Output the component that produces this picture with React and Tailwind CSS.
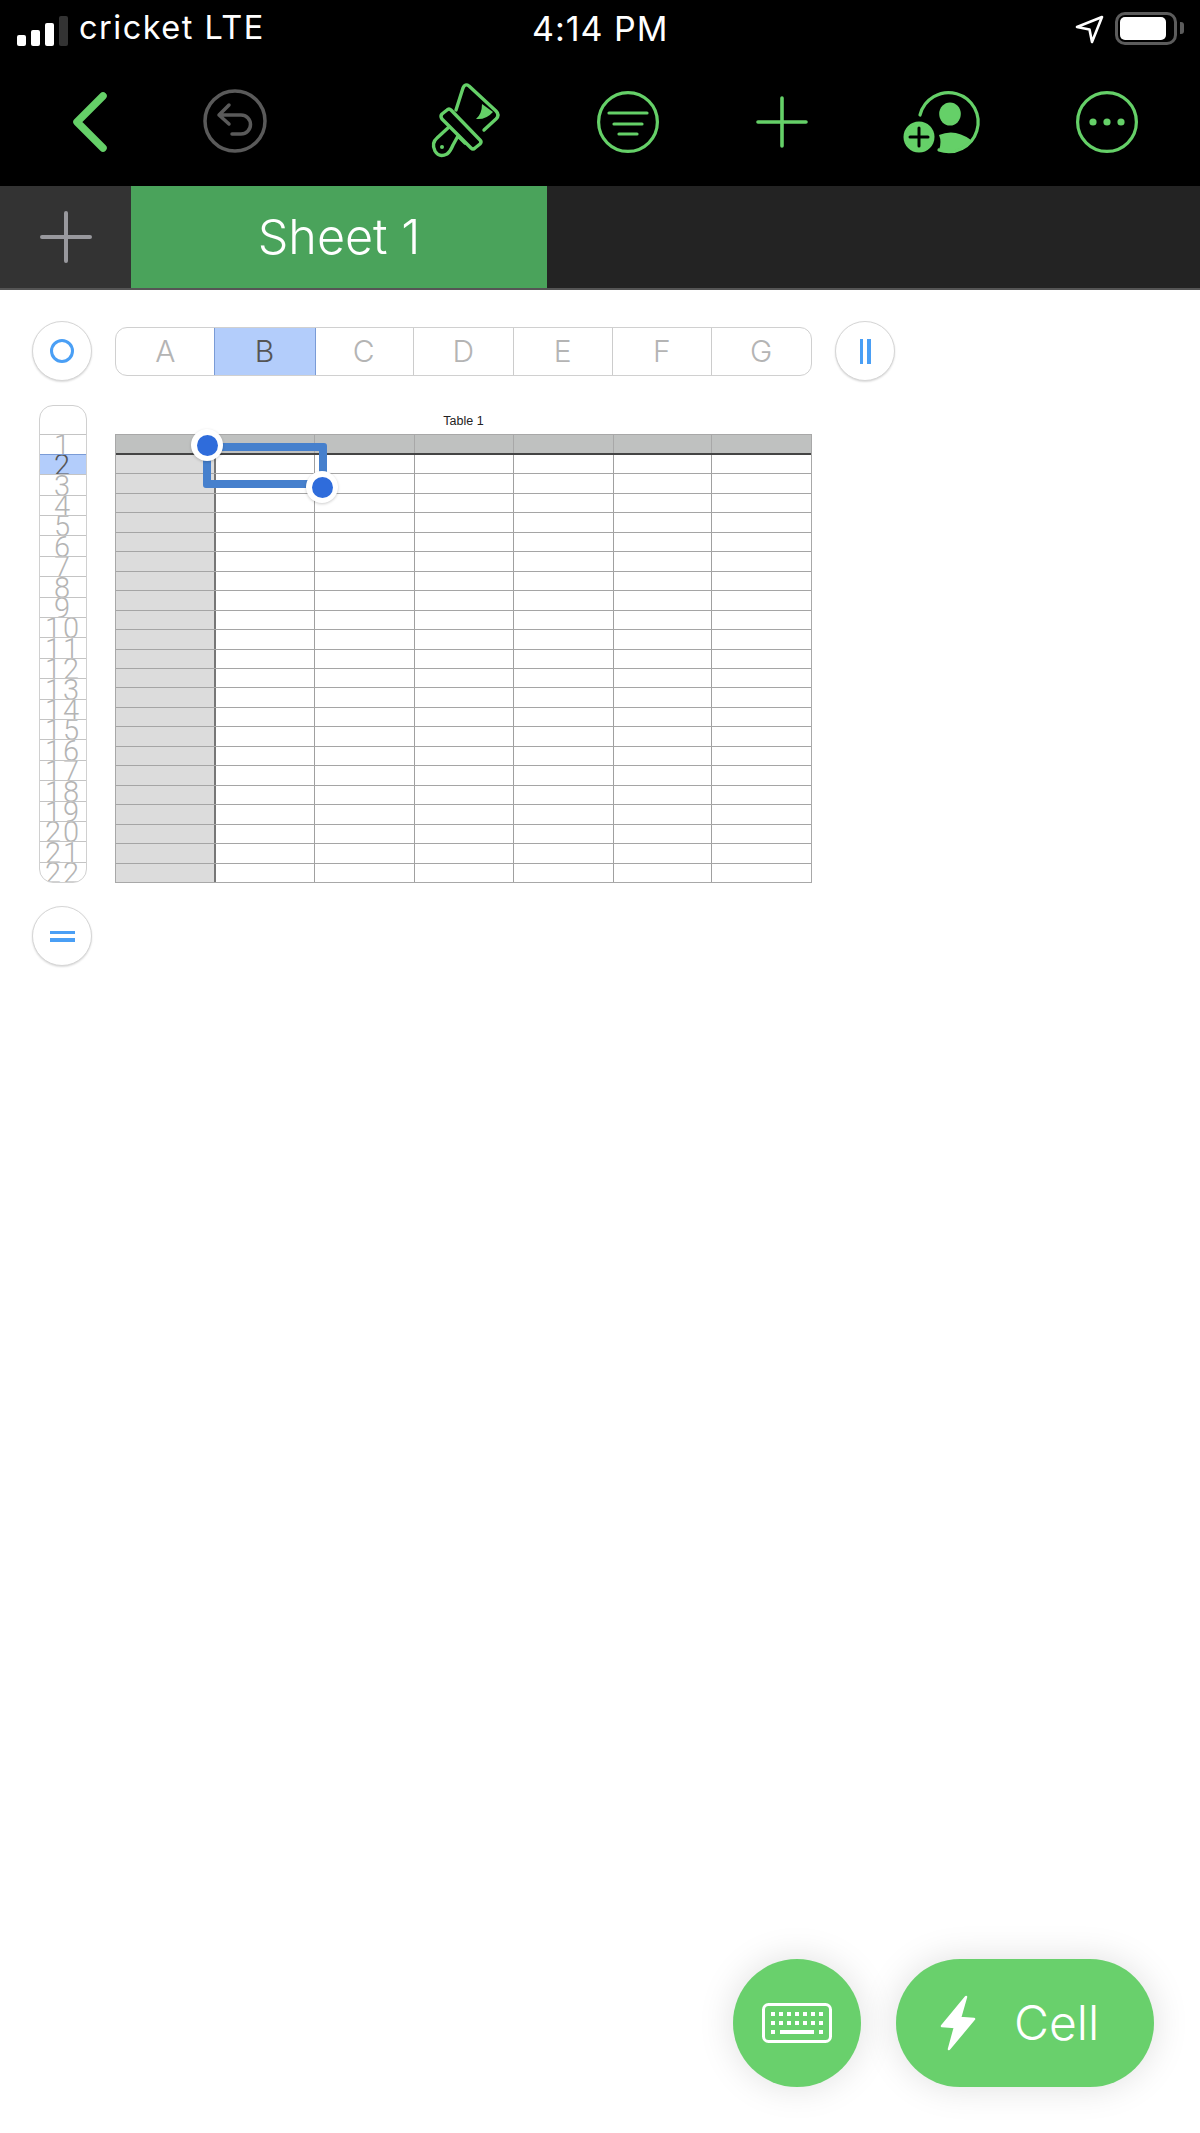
import React from "react";

const COLUMNS = [
  { name: "A", width: "w-[98.5px]", cell: "w-[100px]" },
  { name: "B", width: "w-[100px]", cell: "w-[99px]" },
  { name: "C", width: "w-[99.5px]", cell: "w-[99.5px]" },
  { name: "D", width: "w-[99.5px]", cell: "w-[99.5px]" },
  { name: "E", width: "w-[99.5px]", cell: "w-[99.5px]" },
  { name: "F", width: "w-[98.5px]", cell: "w-[98.5px]" },
  { name: "G", width: "flex-1", cell: "flex-1" },
];
const ROWS = Array.from({ length: 22 }, (_, i) => i + 1);

const StatusBar = () => (
  <div className="h-[60px] relative flex items-center text-white font-['Inter',sans-serif]">
    <div className="ml-[17px] flex items-end gap-[5px] h-[30px] mb-[-1px]">
      <div className="w-[9px] h-[11px] bg-white rounded-[2px]" />
      <div className="w-[9px] h-[16px] bg-white rounded-[2px]" />
      <div className="w-[9px] h-[23px] bg-white rounded-[2px]" />
      <div className="w-[9px] h-[30px] bg-[#333333] rounded-[2px]" />
    </div>
    <span className="ml-[11px] text-[32.5px] leading-none tracking-[1.5px] mt-[-3px]">cricket LTE</span>
    <span className="absolute left-[532px] top-[11px] text-[34px] leading-[36px] tracking-[1px]">4:14 PM</span>
    <svg className="ml-auto mt-[-2px]" width="30" height="30" viewBox="0 0 30 30" fill="none">
      <path d="M2 13 L27 3 L17 28 L14.5 15.5 Z" stroke="white" strokeWidth="2.6" strokeLinejoin="round" />
    </svg>
    <div className="ml-[10px] mr-[16px] flex items-center mt-[-4px]">
      <div className="w-[62px] h-[33px] rounded-[10px] border-[3px] border-[#5c5c5c] p-[2px]">
        <div className="w-[46px] h-[23px] bg-white rounded-[5px]" />
      </div>
      <div className="ml-[3px] w-[4px] h-[12px] bg-[#5c5c5c] rounded-r-[3px]" />
    </div>
  </div>
);

const Toolbar = () => (
  <div className="h-[126px] pb-[3px] flex items-center text-[#65d068]">
    <svg className="ml-[72px]" width="36" height="62" viewBox="0 0 36 62" fill="none">
      <path d="M31 5 L5 31 L31 57" stroke="currentColor" strokeWidth="7.5" strokeLinecap="round" strokeLinejoin="round" />
    </svg>
    <svg className="ml-[87px]" width="80" height="75" viewBox="0 0 80 75" fill="none" stroke="#5a5a5a" strokeWidth="3.5" strokeLinecap="round" strokeLinejoin="round">
      <circle cx="40" cy="37" r="30" />
      <path d="M34 21 L24 31 L34 40 M24 31 H46 A9.5 9.5 0 0 1 46 50 H37" />
    </svg>
    <svg className="ml-[145px]" width="90" height="90" viewBox="0 0 90 90" fill="none" stroke="currentColor" strokeWidth="3.4" strokeLinecap="round" strokeLinejoin="round">
      <path d="M36 33 L43 11 Q45 6 49 9 L76 34 Q80 38 76 42 L64 53" />
      <path d="M62 27 Q62 37 56 42 Q66 43 73 35 Z" fill="currentColor" stroke="none" />
      <path d="M22 37 L27 33 Q29 31 31 33 L60 63 Q62 65 60 67 L55 71 Q53 73 51 71 L22 42 Q20 39 22 37 Z" />
      <path d="M29 50 L17 61 Q11 66 15 74 Q19 81 27 77 Q30 75 33 68 L38 59 L45 66" />
      <circle cx="22" cy="70" r="2" fill="currentColor" stroke="none" />
    </svg>
    <svg className="ml-[87px]" width="62" height="62" viewBox="0 0 62 62" fill="none" stroke="currentColor" strokeWidth="3.2" strokeLinecap="round">
      <circle cx="31" cy="31" r="29.4" />
      <path d="M12 22 H50 M17 33 H45 M22 43 H40" />
    </svg>
    <svg className="ml-[97px]" width="52" height="52" viewBox="0 0 52 52" fill="none" stroke="currentColor" strokeWidth="3.6" strokeLinecap="round">
      <path d="M26 2 V50 M2 26 H50" />
    </svg>
    <svg className="ml-[87px]" width="95" height="80" viewBox="0 0 95 80" fill="none">
      <path d="M25 33 A29.5 29.5 0 1 1 44 68" stroke="currentColor" strokeWidth="3.2" strokeLinecap="round" />
      <ellipse cx="55" cy="32" rx="10.8" ry="11.5" fill="currentColor" />
      <path d="M44 53 Q60 46 76 58 Q64 72 44 68 Q47 60 44 53 Z" fill="currentColor" />
      <circle cx="24" cy="55" r="15.5" fill="currentColor" />
      <path d="M24 46 V64 M15 55 H33" stroke="black" strokeWidth="3" strokeLinecap="round" />
    </svg>
    <svg className="ml-[86px]" width="62" height="62" viewBox="0 0 62 62" fill="none">
      <circle cx="31" cy="31" r="29.4" stroke="currentColor" strokeWidth="3.2" />
      <circle cx="17" cy="31" r="3.6" fill="currentColor" />
      <circle cx="31" cy="31" r="3.6" fill="currentColor" />
      <circle cx="45" cy="31" r="3.6" fill="currentColor" />
    </svg>
  </div>
);

const SheetTabs = () => (
  <div className="h-[104px] flex bg-[#232323] border-b-2 border-[#555555]">
    <div className="w-[131px] bg-[#333333] flex items-center justify-center">
      <svg width="52" height="52" viewBox="0 0 52 52" fill="none" stroke="#98989d" strokeWidth="4" strokeLinecap="round">
        <path d="M26 2 V50 M2 26 H50" />
      </svg>
    </div>
    <div className="w-[416px] bg-[#4aa35b] flex items-center justify-center text-white text-[48.5px] font-light font-['Inter',sans-serif]">
      Sheet 1
    </div>
  </div>
);

const RoundButton = ({ children }) => (
  <div className="w-[60px] h-[60px] shrink-0 rounded-full bg-white border border-[#d6d6d6] shadow-[0_1px_2px_rgba(0,0,0,0.15)] flex items-center justify-center">
    {children}
  </div>
);

const ColumnHeader = () => (
  <div className="ml-[23px] w-[697px] h-[49px] flex rounded-[12px] border-[1.5px] border-[#d0d0d0] overflow-hidden font-['Inter',sans-serif] font-light text-[30px] leading-none">
    {COLUMNS.map((col, i) => (
      <div
        key={col.name}
        className={`${col.width} flex items-center justify-center ${
          col.name === "B" ? "bg-[#b3cdfb] text-[#555555] outline-1 outline-[#7a9bd6]" : "text-[#b4b4b4]"
        } ${i < 6 && col.name !== "A" && col.name !== "B" ? "border-r border-[#cccccc]" : ""}`}
      >
        {col.name}
      </div>
    ))}
  </div>
);

const RowHeader = () => (
  <div className="w-[48px] h-[478px] shrink-0 flex flex-col rounded-[14px] border-[1.5px] border-[#d0d0d0] overflow-hidden font-['Roboto',sans-serif] font-light text-[29px] tracking-[2px]">
    <div className="h-[27.5px] shrink-0" />
    {ROWS.map((n) => (
      <div
        key={n}
        className={`flex-1 min-h-0 overflow-hidden flex items-end justify-center border-t ${
          n === 2 ? "bg-[#b3cdfb] text-[#555555] border-[#7a9bd6]" : "text-[#b4b4b4] border-[#c4c4c4]"
        }`}
      >
        <span className="leading-[18px] h-[18px] whitespace-nowrap">{n}</span>
      </div>
    ))}
  </div>
);

const Handle = ({ className }) => (
  <div className={`absolute w-[32px] h-[32px] rounded-full bg-white shadow-[0_1px_3px_rgba(0,0,0,0.2)] flex items-center justify-center ${className}`}>
    <div className="w-[21px] h-[21px] rounded-full bg-[#2f6cdb]" />
  </div>
);

const Table = () => (
  <div className="ml-[28px] w-[697px]">
    <div className="h-[29px] pt-[9px] text-center text-[12.5px] leading-[14px] text-[#222222] font-['Liberation_Sans',sans-serif]">
      Table 1
    </div>
    <div className="relative h-[449px] flex flex-col border border-[#a8a8a8]">
      <div className="h-[20px] shrink-0 flex bg-[#bfc1c0] border-b-2 border-[#444444]">
        {COLUMNS.map((col, i) => (
          <div key={col.name} className={`${col.cell} ${i < 6 ? "border-r border-[#a8a8a8]" : ""}`} />
        ))}
      </div>
      {ROWS.slice(1).concat(23).map((n) => (
        <div key={n} className={`flex-1 min-h-0 flex ${n < 23 ? "border-b border-[#a5a5a5]" : ""}`}>
          {COLUMNS.map((col, i) => (
            <div
              key={col.name}
              className={`${col.cell} ${
                i === 0 ? "bg-[#dcdcdc] border-r-2 border-[#777777]" : i < 6 ? "border-r border-[#a0a0a0]" : ""
              }`}
            />
          ))}
        </div>
      ))}
      <div className="absolute left-[87px] top-[8px] w-[124px] h-[45px] border-[8px] border-[#4680cd] rounded-[3px]" />
      <Handle className="left-[75px] top-[-6px]" />
      <Handle className="left-[190px] top-[36px]" />
    </div>
  </div>
);

const Fabs = () => (
  <div className="absolute right-[46px] bottom-[46px] flex gap-[35px] text-white">
    <div className="w-[128px] h-[128px] rounded-full bg-[#69d06c] shadow-[0_0_36px_rgba(0,0,0,0.13)] flex items-center justify-center">
      <svg width="70" height="40" viewBox="0 0 70 40" fill="none">
        <rect x="1.5" y="1.5" width="67" height="37" rx="5" stroke="white" strokeWidth="3" />
        {[0, 1, 2, 3, 4, 5, 6].map((i) => (
          <rect key={`a${i}`} x={9 + i * 8} y="9" width="4" height="4" fill="white" />
        ))}
        {[0, 1, 2, 3, 4, 5, 6].map((i) => (
          <rect key={`b${i}`} x={9 + i * 8} y="18" width="4" height="4" fill="white" />
        ))}
        <rect x="9" y="27" width="4" height="4" fill="white" />
        <rect x="18" y="27" width="34" height="4" fill="white" />
        <rect x="57" y="27" width="4" height="4" fill="white" />
      </svg>
    </div>
    <div className="w-[258px] h-[128px] rounded-full bg-[#69d06c] shadow-[0_0_36px_rgba(0,0,0,0.13)] flex items-center">
      <svg className="ml-[44px]" width="36" height="56" viewBox="0 0 36 56" fill="white" stroke="white" strokeWidth="2.5" strokeLinejoin="round">
        <path d="M26 2 L2 31 L15 32 L9 54 L34 24 L20 23 Z" />
      </svg>
      <span className="ml-[38px] text-[48px] leading-none font-light font-['Inter',sans-serif]">Cell</span>
    </div>
  </div>
);

export default function App() {
  return (
    <div className="relative w-[1200px] h-[2133px] overflow-hidden bg-white">
      <div className="bg-black">
        <StatusBar />
        <Toolbar />
      </div>
      <SheetTabs />
      <div className="pt-[31px] pl-[32px]">
        <div className="flex items-center">
          <RoundButton>
            <div className="w-[24px] h-[24px] rounded-full border-[3px] border-[#4a9ff5]" />
          </RoundButton>
          <ColumnHeader />
          <div className="ml-[23px]">
            <RoundButton>
              <div className="flex gap-[4px]">
                <div className="w-[3.5px] h-[25px] bg-[#4a9ff5]" />
                <div className="w-[3.5px] h-[25px] bg-[#4a9ff5]" />
              </div>
            </RoundButton>
          </div>
        </div>
        <div className="mt-[24px] ml-[7px] flex">
          <RowHeader />
          <Table />
        </div>
        <div className="mt-[23px]">
          <RoundButton>
            <div className="flex flex-col gap-[4px]">
              <div className="w-[25px] h-[3.5px] bg-[#4a9ff5]" />
              <div className="w-[25px] h-[3.5px] bg-[#4a9ff5]" />
            </div>
          </RoundButton>
        </div>
      </div>
      <Fabs />
    </div>
  );
}
